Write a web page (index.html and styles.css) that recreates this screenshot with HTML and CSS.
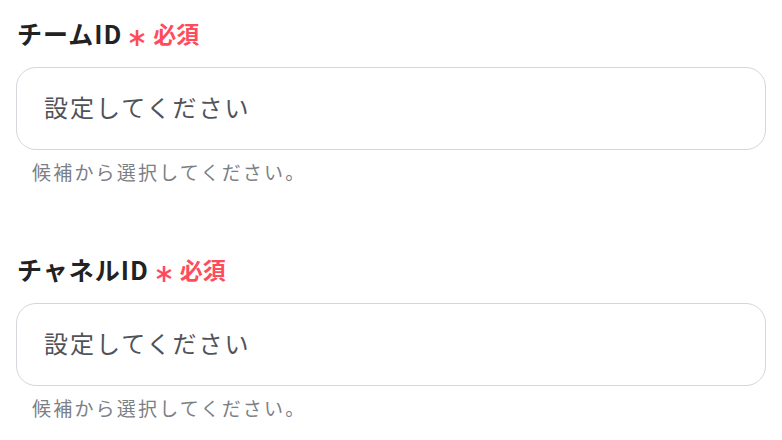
FILE: index.html
```html
<!DOCTYPE html>
<html lang="ja">
<head>
<meta charset="utf-8">
<link rel="stylesheet" href="styles.css">
</head>
<body>
<div class="form">
  <div class="field">
    <div class="label">
      <span class="label-text">チームID</span>
      <svg class="star" viewBox="0 0 18 18" width="18" height="18" aria-hidden="true">
        <g stroke="#ff4b5c" stroke-width="2.6" stroke-linecap="butt">
          <line x1="9" y1="1" x2="9" y2="17"/>
          <line x1="2.1" y1="5" x2="15.9" y2="13"/>
          <line x1="2.1" y1="13" x2="15.9" y2="5"/>
        </g>
      </svg>
      <span class="req">必須</span>
    </div>
    <div class="input"><span class="placeholder">設定してください</span></div>
    <div class="help">候補から選択してください。</div>
  </div>
  <div class="field">
    <div class="label">
      <span class="label-text">チャネルID</span>
      <svg class="star" viewBox="0 0 18 18" width="18" height="18" aria-hidden="true">
        <g stroke="#ff4b5c" stroke-width="2.6" stroke-linecap="butt">
          <line x1="9" y1="1" x2="9" y2="17"/>
          <line x1="2.1" y1="5" x2="15.9" y2="13"/>
          <line x1="2.1" y1="13" x2="15.9" y2="5"/>
        </g>
      </svg>
      <span class="req">必須</span>
    </div>
    <div class="input"><span class="placeholder">設定してください</span></div>
    <div class="help">候補から選択してください。</div>
  </div>
</div>
</body>
</html>
```
FILE: styles.css
```css
html, body {
  margin: 0;
  padding: 0;
  background: #ffffff;
}
body {
  font-family: "Noto Sans CJK JP", "Noto Sans", sans-serif;
  color: #222;
}
.form {
  display: flex;
  flex-direction: column;
  gap: 65px;
  padding: 15px 16px 0 16px;
}
.field {
  display: flex;
  flex-direction: column;
}
.label {
  display: flex;
  align-items: center;
  height: 36px;
  line-height: 36px;
}
.label-text {
  font-size: 25px;
  font-weight: 700;
  letter-spacing: 1px;
  color: #222;
  margin-left: 1px;
}
.star {
  margin: 10px 7px 0 6px;
}
.req {
  font-size: 23px;
  font-weight: 700;
  color: #ff4b5c;
}
.input {
  margin-top: 16px;
  height: 83px;
  box-sizing: border-box;
  border: 1px solid #d3d6db;
  border-radius: 20px;
  display: flex;
  align-items: center;
  padding-left: 27px;
  padding-bottom: 4px;
}
.placeholder {
  font-size: 24px;
  letter-spacing: 2px;
  color: #4f5358;
}
.help {
  margin-top: 8px;
  padding-left: 16px;
  font-size: 19px;
  line-height: 28px;
  letter-spacing: 2.2px;
  color: #7b8086;
}
```
